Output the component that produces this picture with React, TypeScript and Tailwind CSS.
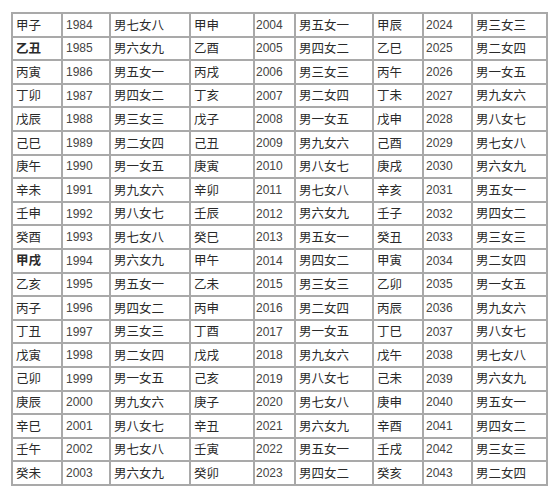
const stems = ["甲", "乙", "丙", "丁", "戊", "己", "庚", "辛", "壬", "癸"]
const branches = ["子", "丑", "寅", "卯", "辰", "巳", "午", "未", "申", "酉", "戌", "亥"]
const male = ["七", "六", "五", "四", "三", "二", "一", "九", "八"]
const female = ["八", "九", "一", "二", "三", "四", "五", "六", "七"]

function ganzhi(year: number) {
  const i = year - 1984
  return stems[((i % 10) + 10) % 10] + branches[((i % 12) + 12) % 12]
}

function result(year: number) {
  const i = (((year - 1984) % 9) + 9) % 9
  return `男${male[i]}女${female[i]}`
}

const cjk = "font-['SimSun','Noto_Sans_CJK_SC',sans-serif] text-[12.5px]"
const num = "font-['Liberation_Sans',Arial,sans-serif] text-[12px]"

const bold = ["乙丑", "甲戌"]

function Cell({ children, className = "" }: { children: React.ReactNode; className?: string }) {
  return (
    <div className={`bg-white flex items-center text-[#2a2a2a] leading-none ${className}`}>
      {children}
    </div>
  )
}

export default function App() {
  const rows = Array.from({ length: 20 }, (_, i) => i)

  return (
    <div className="w-[560px] h-[500px] bg-white pt-[12px] pl-[11px]">
      <div className="w-[537px] grid grid-cols-[48px_46px_78px_62px_39px_76px_48px_47px_73px] auto-rows-[21.6px] gap-[2px] p-[2px] bg-[#a9a9a9]">
        {rows.map((i) => {
          const y1 = 1984 + i
          const y2 = 2004 + i
          const y3 = 2024 + i
          const g1 = ganzhi(y1)
          return [
            <Cell key={`a${i}`} className={`${cjk} pl-[3px] ${bold.includes(g1) ? "font-bold" : ""}`}>{g1}</Cell>,
            <Cell key={`b${i}`} className={`${num} pl-[3px] text-[#444]`}>{y1}</Cell>,
            <Cell key={`c${i}`} className={`${cjk} pl-[3px]`}>{result(y1)}</Cell>,
            <Cell key={`d${i}`} className={`${cjk} pl-[3px]`}>{ganzhi(y2)}</Cell>,
            <Cell key={`e${i}`} className={`${num} pl-[1px] text-[#444]`}>{y2}</Cell>,
            <Cell key={`f${i}`} className={`${cjk} pl-[3px]`}>{result(y2)}</Cell>,
            <Cell key={`g${i}`} className={`${cjk} pl-[3px]`}>{ganzhi(y3)}</Cell>,
            <Cell key={`h${i}`} className={`${num} pl-[2px] text-[#444]`}>{y3}</Cell>,
            <Cell key={`k${i}`} className={`${cjk} pl-[3px]`}>{result(y3)}</Cell>,
          ]
        })}
      </div>
    </div>
  )
}
